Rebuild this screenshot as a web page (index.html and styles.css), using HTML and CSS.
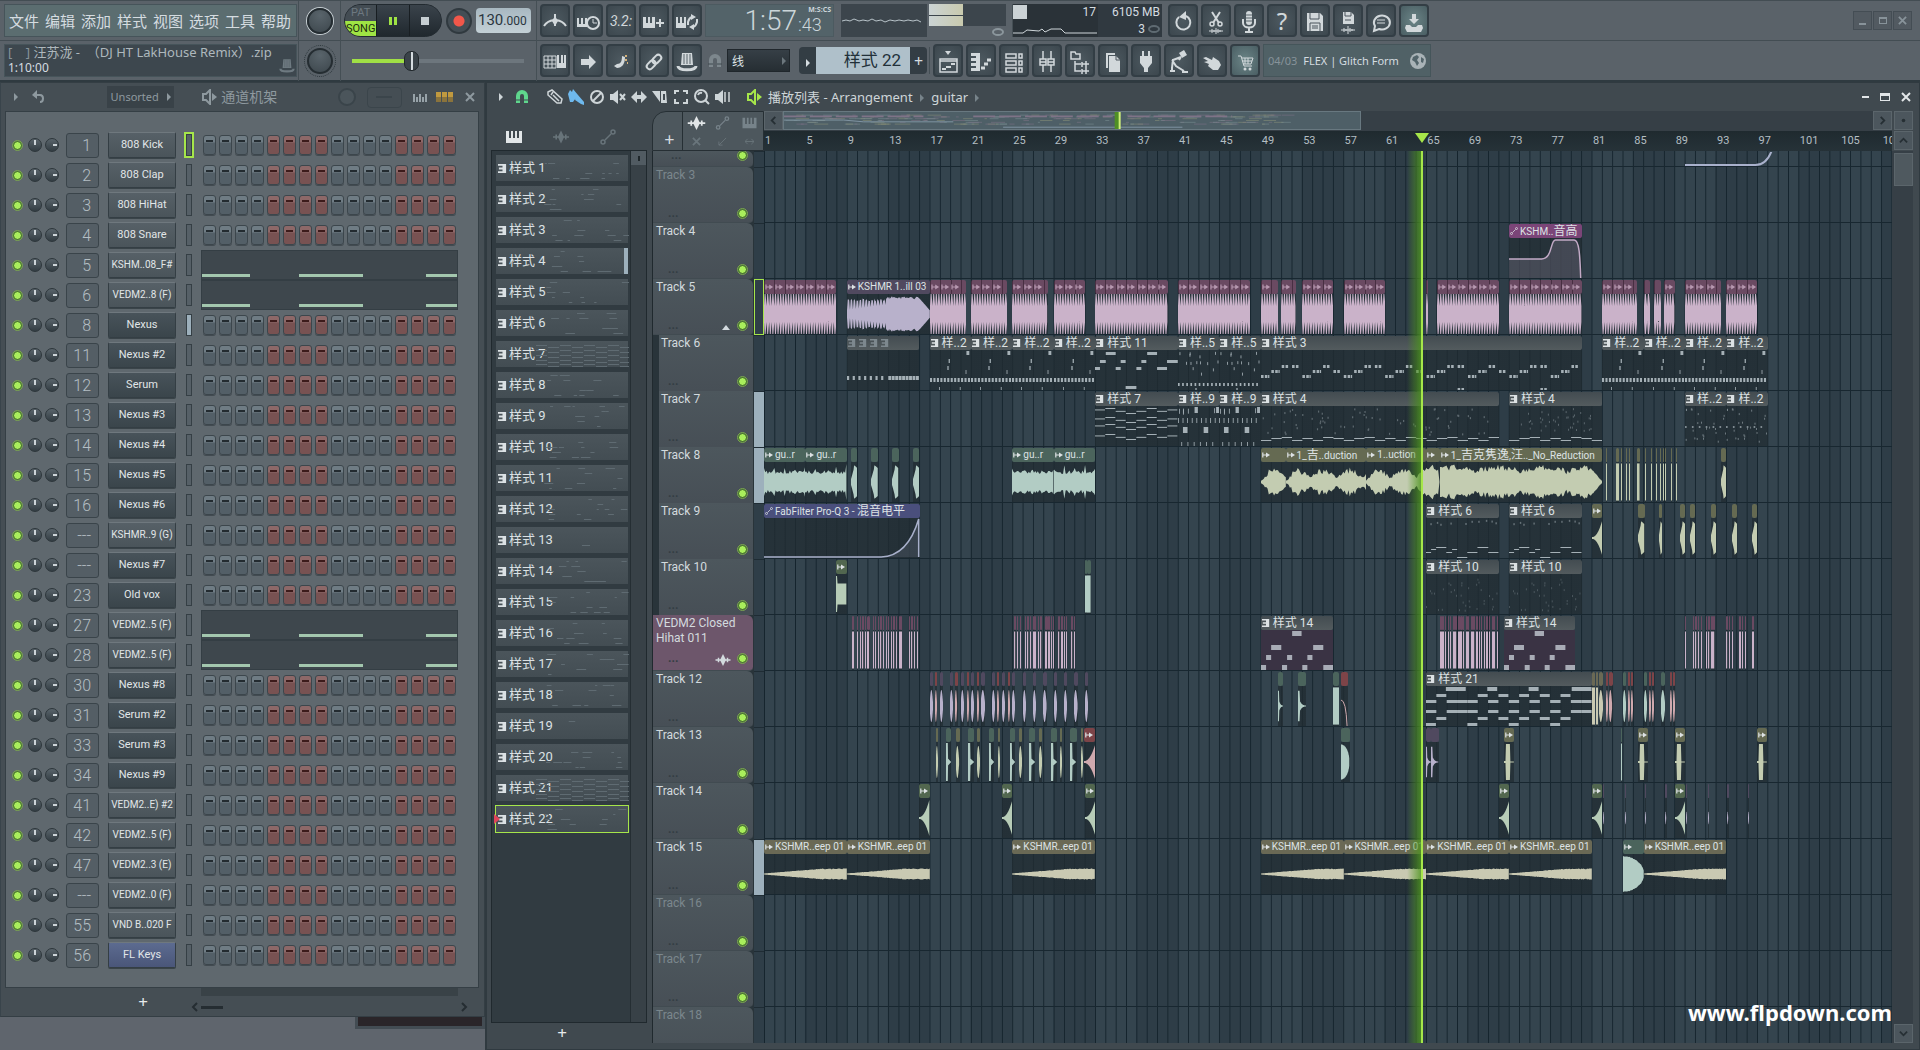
FILE: index.html
```html
<!DOCTYPE html>
<html lang="zh-CN">
<head>
    <meta charset="UTF-8">
    <meta name="viewport" content="width=device-width, initial-scale=1.0">
    <title>播放列表 - Arrangement</title>
    <link rel="stylesheet" href="styles.css">
</head>
<body>
    <svg class="sprite" aria-hidden="true">
        <symbol id="i-metronome" viewBox="0 0 30 30"><path d="M15 8v12M4 20q3-5 10-6M26 20q-3-5-10-6" fill="none" stroke="currentColor" stroke-width="2"/><path d="M15 10l3 5-3 5-3-5z" fill="currentColor"/></symbol>
        <symbol id="i-keyclock" viewBox="0 0 30 30"><path d="M4 12h2v6h2v-6h2v6h2v-6h2v9H4z" fill="currentColor"/><circle cx="20" cy="17" r="6" fill="#414d54" stroke="currentColor" stroke-width="2"/><path d="M20 13v4h4" fill="none" stroke="currentColor" stroke-width="1"/></symbol>
        <symbol id="i-keyplus" viewBox="0 0 30 30"><path d="M4 11h3v6h2v-6h2v6h2v-6h3v11H4zM20 13h2v3h3v2h-3v3h-2v-3h-3v-2h3z" fill="currentColor"/></symbol>
        <symbol id="i-keyloop" viewBox="0 0 30 30"><path d="M4 11h2v6h2v-6h2v6h2v-6h2v11H4z" fill="currentColor"/><path d="M16 19v-3q1-4 4-5M25 13v3q-1 4-4 5" fill="none" stroke="currentColor" stroke-width="2"/><path d="M19 8l5 3-5 3zM22 18l-5 3 5 3z" fill="currentColor"/></symbol>
        <symbol id="i-typing" viewBox="0 0 30 30"><path d="M4 10h12v12H4zM4 14h12M4 18h12M8 10v12M12 10v12" fill="none" stroke="currentColor" stroke-width="1"/><path d="M17 9h2v8h2V9h2v8h1V9h2v13h-9z" fill="currentColor"/></symbol>
        <symbol id="i-arrow" viewBox="0 0 30 30"><path d="M8 13h8V9l7 7-7 7v-4H8z" fill="currentColor"/></symbol>
        <symbol id="i-slide" viewBox="0 0 30 30"><path d="M8 20l3-2c4 0 5-3 5-8l3 1c0 7-3 11-8 11z" fill="currentColor"/><path d="M20 9v2M20 13v2M21 17h1" stroke="#d4b27a" stroke-width="2"/></symbol>
        <symbol id="i-link" viewBox="0 0 30 30"><g fill="none" stroke="currentColor" stroke-width="2" transform="rotate(-45 15 16)"><rect x="6" y="13" width="10" height="6" rx="3"/><rect x="14" y="13" width="10" height="6" rx="3"/></g></symbol>
        <symbol id="i-hat" viewBox="0 0 30 30"><path d="M10 7h10l1 12H9z" fill="currentColor"/><path d="M12 8v10M15 8v10M18 8v10" stroke="#59646b" stroke-width="1"/><path d="M6 20c0 5 18 5 18 0" fill="none" stroke="currentColor" stroke-width="3"/></symbol>
        <symbol id="i-undo" viewBox="0 0 30 30"><path d="M11 11a7 7 0 1 0 7-1" fill="none" stroke="currentColor" stroke-width="2"/><path d="M18 5v9l-7-3z" fill="currentColor"/></symbol>
        <symbol id="i-scissors" viewBox="0 0 30 30"><path d="M11 6l7 11M19 6l-7 11" stroke="currentColor" stroke-width="2"/><circle cx="11" cy="18" r="2" fill="none" stroke="currentColor" stroke-width="1.5"/><circle cx="19" cy="18" r="2" fill="none" stroke="currentColor" stroke-width="1.5"/><path d="M8 25h14M11 23v4M13 24v2M15 22v6M17 23v4M19 24v2" stroke="currentColor"/></symbol>
        <symbol id="i-mic" viewBox="0 0 30 30"><rect x="12" y="5" width="6" height="14" rx="3" fill="currentColor"/><path d="M12 9h6M12 12h6M12 15h6" stroke="#59646b"/><path d="M9 13v4c0 6 12 6 12 0v-4M15 21v5M11 26h8" fill="none" stroke="currentColor" stroke-width="2"/></symbol>
        <symbol id="i-save" viewBox="0 0 30 30"><path d="M7 7h13l3 3v15H7z" fill="currentColor"/><path d="M10 7v6h9V7M10 17v8M20 17v8M10 17h10M12 20h6M12 22h6" fill="none" stroke="#4a555c"/></symbol>
        <symbol id="i-savewave" viewBox="0 0 30 30"><path d="M10 6h8l3 3v9H10z" fill="currentColor"/><path d="M12 6v4h6V6M12 14h6" fill="none" stroke="#4a555c"/><path d="M8 24h14M11 22v4M13 23v2M15 20v8M17 22v4M19 23v2" stroke="currentColor"/></symbol>
        <symbol id="i-chat" viewBox="0 0 30 30"><path d="M9 20a8 7 0 1 1 4 3l-5 2z" fill="none" stroke="currentColor" stroke-width="2"/><path d="M11 14h8M11 17h8" stroke="currentColor"/></symbol>
        <symbol id="i-download" viewBox="0 0 30 30"><path d="M13 8h4v5h3l-5 5-5-5h3z" fill="currentColor"/><path d="M7 19h4l2 2h4l2-2h4l1 3-2 4H8l-2-4z" fill="currentColor"/></symbol>
        <symbol id="i-playlist" viewBox="0 0 30 30"><path d="M12 5h6l-3 4z" fill="currentColor"/><path d="M7 13h17v13H7zM7 15h17" fill="none" stroke="currentColor" stroke-width="1.5"/><path d="M9 23h4M13 21h5M18 18h4" stroke="currentColor" stroke-width="2"/></symbol>
        <symbol id="i-roll" viewBox="0 0 30 30"><path d="M5 7h9v18H5v-3h5v-2H5v-3h5v-2H5v-3h5v-2H5z" fill="currentColor"/><path d="M15 22h4M18 18h4M21 14h4" stroke="currentColor" stroke-width="3"/></symbol>
        <symbol id="i-rack" viewBox="0 0 30 30"><path d="M7 8h10v4H7zM7 15h10v4H7zM7 22h10v4H7zM20 8h3v4h-3zM20 15h3v4h-3zM20 22h3v4h-3z" fill="none" stroke="currentColor" stroke-width="1.5"/></symbol>
        <symbol id="i-mixer" viewBox="0 0 30 30"><path d="M11 5v8M11 19v7M19 5v8M19 19v7M8 13h6v6H8zM16 13h6v6h-6zM8 16h6M16 16h6" fill="none" stroke="currentColor" stroke-width="1.5"/></symbol>
        <symbol id="i-tree" viewBox="0 0 30 30"><path d="M6 6h4l1 2h4v5H6zM10 15v10h6M10 18h6" fill="none" stroke="currentColor" stroke-width="1.5"/><path d="M17 16v5M17 18h7M21 15v7M17 23v5M17 25h7M21 22v6" stroke="currentColor" stroke-width="1.5"/></symbol>
        <symbol id="i-pages" viewBox="0 0 30 30"><path d="M8 7h9v2h-7v13H8z" fill="currentColor"/><path d="M11 10h7l4 4v12H11z" fill="currentColor"/><path d="M18 10v4h4" fill="none" stroke="#4a555c"/></symbol>
        <symbol id="i-plug" viewBox="0 0 30 30"><path d="M11 5h2v5h4V5h2v5h2v7l-4 5v4h-4v-4l-4-5v-7h2z" fill="currentColor"/></symbol>
        <symbol id="i-person" viewBox="0 0 30 30"><path d="M15 7l5-3 3 5-5 3z" fill="currentColor"/><path d="M17 11L9 14M9 13l-1 9M8 14l4 6 8 5M17 11l-2 3M6 25h5M18 26h6M8 21v4" fill="none" stroke="currentColor" stroke-width="2"/></symbol>
        <symbol id="i-hand" viewBox="0 0 30 30"><path d="M6 12l3-1 6 3 1-3 6 4 2 4-3 5h-5l-5-4 1-2-5-2 4-1z" fill="currentColor"/></symbol>
        <symbol id="i-cart" viewBox="0 0 30 30"><path d="M8 10h3l3 10h8M12 12h11l-2 6h-8M15 12v6M18 12v6M12 15h10" fill="none" stroke="currentColor"/><circle cx="15" cy="23" r="1.5" fill="currentColor"/><circle cx="20" cy="23" r="1.5" fill="currentColor"/></symbol>
        <symbol id="i-globe" viewBox="0 0 16 16"><circle cx="8" cy="8" r="8" fill="currentColor"/><path d="M3 4l4-2 2 2-2 3 2 3-2 3-2-4-3-2zM11 4l3 2-1 4-2-1z" fill="#52646a"/></symbol>
        <symbol id="i-speaker" viewBox="0 0 16 16"><path d="M1 5h3l4-4v14l-4-4H1z" fill="none" stroke="currentColor" stroke-width="2"/><path d="M10 4l5 4-5 4z" fill="currentColor"/></symbol>
        <symbol id="i-magnet" viewBox="0 0 16 16"><path d="M4 14V7a4 4 0 0 1 8 0v7" fill="none" stroke="currentColor" stroke-width="4"/><path d="M1 11h5M10 11h5" stroke="#414a51" stroke-width="1"/></symbol>
        <symbol id="i-pencil" viewBox="0 0 16 16"><path d="M1 3l4-2 10 9-1 4-4 0-9-8zM4 6l2-3M6 6l6 6M1 3v3" fill="none" stroke="currentColor" stroke-width="1.5"/></symbol>
        <symbol id="i-brush" viewBox="0 0 16 16"><path d="M0 5l2-4 2 2 1-3 5 6-5 7-3 0zM8 8l2-2 6 7v3l-3-1-6-4z" fill="currentColor"/></symbol>
        <symbol id="i-ban" viewBox="0 0 16 16"><circle cx="8" cy="8" r="6" fill="none" stroke="currentColor" stroke-width="2"/><path d="M4 12l8-8" stroke="currentColor" stroke-width="2"/></symbol>
        <symbol id="i-mute" viewBox="0 0 16 16"><path d="M0 5h3l5-4v14l-5-4H0z" fill="currentColor"/><path d="M10 5l5 6M15 5l-5 6" stroke="currentColor" stroke-width="2"/></symbol>
        <symbol id="i-slip" viewBox="0 0 16 16"><path d="M0 8l6-6v4h4V2l6 6-6 6v-4H6v4z" fill="currentColor"/></symbol>
        <symbol id="i-slice" viewBox="0 0 16 16"><path d="M0 2h8v11zM9 2h5l1 12h-6z" fill="currentColor"/><path d="M12 5v6" stroke="#414a51" stroke-width="2"/></symbol>
        <symbol id="i-select" viewBox="0 0 16 16"><path d="M2 5V2h4M10 2h4v3M14 10v4h-4M6 14H2v-4" fill="none" stroke="currentColor" stroke-width="2"/></symbol>
        <symbol id="i-zoom" viewBox="0 0 16 16"><circle cx="7" cy="7" r="6" fill="none" stroke="currentColor" stroke-width="2"/><path d="M4 6q1-3 4-2M11 11l4 4" fill="none" stroke="currentColor" stroke-width="2"/></symbol>
        <symbol id="i-play" viewBox="0 0 16 16"><path d="M0 5h3l5-4v14l-5-4H0z" fill="currentColor"/><path d="M10 3v10M14 3v10" stroke="currentColor" stroke-width="1.5"/></symbol>
        <symbol id="i-keys" viewBox="0 0 16 16"><path d="M0 2h3v7h2V2h2v7h2V2h2v7h2V2h3v12H0z" fill="currentColor"/></symbol>
        <symbol id="i-wave" viewBox="0 0 20 16"><path d="M0 8h20M4 5v6M16 5v6" stroke="currentColor" stroke-width="2"/><path d="M10 0l4 8-4 8-4-8z" fill="currentColor"/></symbol>
        <symbol id="i-auto" viewBox="0 0 16 16"><path d="M5 11l6-6" stroke="currentColor" stroke-width="1.5"/><circle cx="3" cy="13" r="2" fill="none" stroke="currentColor" stroke-width="1.5"/><circle cx="13" cy="3" r="2" fill="none" stroke="currentColor" stroke-width="1.5"/></symbol>
        <symbol id="i-clip" viewBox="0 0 10 10"><path d="M1 2v6M1 5h5" stroke="currentColor" stroke-width="1.5" fill="none"/><path d="M5 2l5 3-5 3z" fill="currentColor"/></symbol>
        <symbol id="i-pat" viewBox="0 0 10 10"><path d="M0 0h9v10H0V8h5V6H1V4h4V2H0z" fill="currentColor"/></symbol>
        <symbol id="i-back" viewBox="0 0 16 16"><path d="M6 1v9L1 6z" fill="currentColor"/><path d="M5 6h4c4 0 4 7 0 7" fill="none" stroke="currentColor" stroke-width="2"/></symbol>
        <symbol id="i-close" viewBox="0 0 10 10"><path d="M1 1l8 8M9 1L1 9" stroke="currentColor" stroke-width="2"/></symbol>
        <symbol id="i-up" viewBox="0 0 10 10"><path d="M1 7l4-4 4 4" fill="none" stroke="currentColor" stroke-width="2"/></symbol>
        <symbol id="i-down" viewBox="0 0 10 10"><path d="M1 3l4 4 4-4" fill="none" stroke="currentColor" stroke-width="2"/></symbol>
        <symbol id="i-prev" viewBox="0 0 10 10"><path d="M7 1L3 5l4 4" fill="none" stroke="currentColor" stroke-width="2"/></symbol>
        <symbol id="i-next" viewBox="0 0 10 10"><path d="M3 1l4 4-4 4" fill="none" stroke="currentColor" stroke-width="2"/></symbol>
        <symbol id="i-dot" viewBox="0 0 10 10"><circle cx="5" cy="5" r="2" fill="currentColor"/></symbol>
        <symbol id="i-curve" viewBox="0 0 10 10"><path d="M1 9L9 1M1 5v4h4" fill="none" stroke="currentColor"/></symbol>
        <symbol id="i-wide" viewBox="0 0 10 10"><path d="M0 5h10M3 2L0 5l3 3M7 2l3 3-3 3" fill="none" stroke="currentColor"/></symbol>
    </svg>

    <header class="toolbar">
        <div class="bar">
            <nav class="menu">
                <a href="#">文件</a><a href="#">编辑</a><a href="#">添加</a><a href="#">样式</a><a href="#">视图</a><a href="#">选项</a><a href="#">工具</a><a href="#">帮助</a>
            </nav>
            <div class="knob-cell"><span class="big-knob ring"></span></div>
            <div class="transport">
                <div class="deck">
                    <button class="mode"><span class="pat">PAT</span><span class="song">SONG</span></button>
                    <button class="pause" aria-label="Pause"><i></i><i></i></button>
                    <button class="stop" aria-label="Stop"><i></i></button>
                </div>
                <button class="record" aria-label="Record"></button>
                <div class="tempo"><b>130</b>.000</div>
            </div>
            <div class="buttons">
                <button class="tool" aria-label="Metronome"><svg><use href="#i-metronome"/></svg></button>
                <button class="tool" aria-label="Wait for input"><svg><use href="#i-keyclock"/></svg></button>
                <button class="tool count">3.2:</button>
                <button class="tool" aria-label="Step edit"><svg><use href="#i-keyplus"/></svg></button>
                <button class="tool" aria-label="Loop record"><svg><use href="#i-keyloop"/></svg></button>
            </div>
            <div class="clock"><span class="big">1:57</span><span class="rest"><small>M:S:CS</small><span>:43</span></span></div>
            <div class="meters">
                <svg class="scope" viewBox="0 0 86 33"><path d="M1 17l4-1 4 1 4-2 5 2 4-1 5 1 4-2 4 2 5-1 4 2 5-2 5 1 4-1 5 1 4-1 5 1 4-1 4 2" fill="none" stroke="#b9c4ca" stroke-width="1"/></svg>
                <div class="peaks"><div class="peak-box"><i></i><i></i></div><span class="eye"></span></div>
            </div>
            <div class="cpu">
                <div class="cpu-left"><i></i><span>17</span><svg viewBox="0 0 84 14"><path d="M0 11h10l4-3 12 1 3-2 3 3 6-3 10 0 4 4h32" fill="none" stroke="#cfd6da"/></svg></div>
                <div class="cpu-right"><span>6105 MB</span><span>3 <em></em></span></div>
            </div>
            <div class="buttons">
                <button class="tool" aria-label="Undo"><svg><use href="#i-undo"/></svg></button>
                <button class="tool" aria-label="Cut"><svg><use href="#i-scissors"/></svg></button>
                <button class="tool" aria-label="Record audio"><svg><use href="#i-mic"/></svg></button>
                <button class="tool help">?</button>
                <button class="tool" aria-label="Save"><svg><use href="#i-save"/></svg></button>
                <button class="tool" aria-label="Export"><svg><use href="#i-savewave"/></svg></button>
                <button class="tool" aria-label="Chat"><svg><use href="#i-chat"/></svg></button>
                <button class="tool teal" aria-label="Download"><svg><use href="#i-download"/></svg></button>
            </div>
            <div class="win-buttons">
                <button aria-label="Minimise"><i class="min"></i></button>
                <button aria-label="Restore"><i class="restore"></i></button>
                <button aria-label="Close"><svg><use href="#i-close"/></svg></button>
            </div>
        </div>
        <div class="bar">
            <div class="hint">
                <div><span class="dim">[ &nbsp; &nbsp;]</span> 汪苏泷 -&nbsp; （DJ HT LakHouse Remix）.zip</div>
                <div class="time">1:10:00</div>
                <svg class="hint-icon"><use href="#i-hat"/></svg>
            </div>
            <div class="knob-cell"><span class="big-knob dots"></span></div>
            <div class="transport"><input type="range" class="position" min="0" max="100" value="33" aria-label="Song position"></div>
            <div class="buttons">
                <button class="tool" aria-label="Typing keyboard"><svg><use href="#i-typing"/></svg></button>
                <button class="tool" aria-label="Step"><svg><use href="#i-arrow"/></svg></button>
                <button class="tool" aria-label="Slide"><svg><use href="#i-slide"/></svg></button>
                <button class="tool" aria-label="Link"><svg><use href="#i-link"/></svg></button>
                <button class="tool" aria-label="Multilink"><svg><use href="#i-hat"/></svg></button>
            </div>
            <div class="pattern-bar">
                <svg class="magnet"><use href="#i-magnet"/></svg>
                <div class="snap-wrap">
                    <select class="snap" aria-label="Snap"><option>线</option></select>
                    <i class="tri"></i>
                </div>
                <div class="pattern">
                    <button class="side" aria-label="Pattern menu"><i class="tri"></i></button>
                    <span class="pattern-name">样式 22</span>
                    <button class="side">+</button>
                </div>
            </div>
            <div class="buttons">
                <button class="tool" aria-label="Playlist"><svg><use href="#i-playlist"/></svg></button>
                <button class="tool" aria-label="Piano roll"><svg><use href="#i-roll"/></svg></button>
                <button class="tool" aria-label="Channel rack"><svg><use href="#i-rack"/></svg></button>
                <button class="tool" aria-label="Mixer"><svg><use href="#i-mixer"/></svg></button>
                <button class="tool" aria-label="Browser"><svg><use href="#i-tree"/></svg></button>
                <button class="tool" aria-label="Project picker"><svg><use href="#i-pages"/></svg></button>
                <button class="tool" aria-label="Plugins"><svg><use href="#i-plug"/></svg></button>
                <button class="tool" aria-label="Tempo tapper"><svg><use href="#i-person"/></svg></button>
                <button class="tool" aria-label="Touch"><svg><use href="#i-hand"/></svg></button>
                <button class="tool teal" aria-label="Shop"><svg><use href="#i-cart"/></svg></button>
            </div>
            <div class="news"><span class="dim">04/03</span><a href="#">FLEX | Glitch Form</a><svg><use href="#i-globe"/></svg></div>
        </div>
    </header>

    <main>
        <div class="left">
            <section class="rack">
                <div class="rack-head">
                    <i class="tri"></i>
                    <svg class="sm"><use href="#i-back"/></svg>
                    <button class="group">Unsorted <i class="tri"></i></button>
                    <svg class="sm title-icon"><use href="#i-speaker"/></svg>
                    <h2>通道机架</h2>
                    <span class="swing"></span>
                    <span class="swing-box"><i></i></span>
                    <span class="graph"><i></i><i></i><i></i><i></i><i></i></span>
                    <span class="grid-mode"><i></i><i></i><i></i></span>
                    <svg class="sm close"><use href="#i-close"/></svg>
                </div>
                <div class="channels" id="channels"></div>
                <div class="rack-foot">
                    <button class="add" aria-label="Add channel">+</button>
                    <div class="rack-scroll">
                        <div class="track"></div>
                        <div class="thumb-row"><svg><use href="#i-prev"/></svg><i></i><svg><use href="#i-next"/></svg></div>
                    </div>
                </div>
            </section>
            <div class="behind"></div>
        </div>

        <section class="playlist">
            <div class="pl-head">
                <i class="tri"></i>
                <svg class="sm green-icon"><use href="#i-magnet"/></svg>
                <div class="pl-tools">
                    <svg class="sm"><use href="#i-pencil"/></svg>
                    <svg class="sm blue-icon"><use href="#i-brush"/></svg>
                    <svg class="sm"><use href="#i-ban"/></svg>
                    <svg class="sm"><use href="#i-mute"/></svg>
                    <svg class="sm"><use href="#i-slip"/></svg>
                    <svg class="sm"><use href="#i-slice"/></svg>
                    <svg class="sm"><use href="#i-select"/></svg>
                    <svg class="sm"><use href="#i-zoom"/></svg>
                    <svg class="sm"><use href="#i-play"/></svg>
                </div>
                <svg class="sm lime-icon"><use href="#i-speaker"/></svg>
                <h2>播放列表 - Arrangement <i class="tri"></i> guitar <i class="tri"></i></h2>
                <div class="pl-win"><i class="min"></i><i class="max"></i><svg><use href="#i-close"/></svg></div>
            </div>
            <div class="pl-body">
                <aside class="picker">
                    <div class="picker-tabs">
                        <svg class="sm"><use href="#i-keys"/></svg>
                        <svg class="sm off"><use href="#i-wave"/></svg>
                        <svg class="sm off"><use href="#i-auto"/></svg>
                    </div>
                    <div class="picker-box">
                        <ul class="patterns" id="patterns"></ul>
                        <div class="picker-scroll"><i></i></div>
                    </div>
                    <button class="add" aria-label="Add pattern">+</button>
                </aside>
                <div class="arrange">
                    <div class="corner">
                        <button class="corner-add" aria-label="Add track">+</button>
                        <div class="corner-modes">
                            <svg><use href="#i-wave"/></svg><svg class="off"><use href="#i-auto"/></svg><svg class="off"><use href="#i-keys"/></svg>
                            <svg class="tiny"><use href="#i-close"/></svg><svg class="tiny"><use href="#i-curve"/></svg><svg class="tiny"><use href="#i-wide"/></svg>
                        </div>
                    </div>
                    <div class="top-strip">
                        <div class="overview">
                            <button aria-label="Scroll left"><svg><use href="#i-prev"/></svg></button>
                            <div class="view" id="view"></div>
                            <button aria-label="Scroll right"><svg><use href="#i-next"/></svg></button>
                        </div>
                        <div class="ruler" id="ruler"></div>
                    </div>
                    <div class="scroll-top">
                        <button aria-label="Zoom"><svg><use href="#i-dot"/></svg></button>
                        <button aria-label="Scroll up"><svg><use href="#i-up"/></svg></button>
                    </div>
                    <div class="heads" id="heads"></div>
                    <div class="lanes-wrap">
                        <div class="lanes" id="lanes"></div>
                        <div class="watermark">www.flpdown.com</div>
                    </div>
                    <div class="scroll-side"><i></i><button aria-label="Scroll down"><svg><use href="#i-down"/></svg></button></div>
                </div>
            </div>
        </section>
    </main>
    <script src="script.js"></script>
</body>
</html>
```
FILE: styles.css
```css
* {
    box-sizing: border-box;
}
body {
    margin: 0;
    height: 100vh;
    display: flex;
    flex-direction: column;
    overflow: hidden;
    background: #5d656c;
    color: #d5dce0;
    font: 13px/16px "Noto Sans", "Noto Sans CJK SC", sans-serif;
}
button {
    font: inherit;
    color: inherit;
    padding: 0;
    border: none;
    background: none;
}
a {
    color: inherit;
    text-decoration: none;
}
h2 {
    margin: 0;
    font-size: 15px;
    font-weight: normal;
}
.sprite {
    display: none;
}
.dim {
    color: #87939a;
}
.tri {
    display: inline-block;
    border: 4px solid transparent;
    border-left-color: currentColor;
    border-right-width: 0;
}
.sm {
    width: 16px;
    height: 16px;
    flex: none;
}

/* main toolbar */
.toolbar {
    flex: none;
    background: #5a6269;
    border-bottom: 2px solid #2f3a40;
}
.bar {
    display: flex;
    align-items: center;
    height: 40px;
    border-top: 1px solid #434d53;
    padding-left: 4px;
}
.menu, .hint {
    width: 293px;
    height: 33px;
    flex: none;
    border: 1px solid #46545a;
}
.menu {
    display: flex;
    align-items: center;
    gap: 6px;
    padding: 0 4px;
    background: #5b6d70;
    font-size: 15px;
    white-space: nowrap;
}
.hint {
    background: #3d474e;
    padding: 0 3px;
    line-height: 15px;
    position: relative;
    color: #aeb8bd;
    white-space: nowrap;
}
.hint .time {
    color: #d5dce0;
    font-size: 12px;
}
.hint-icon {
    position: absolute;
    right: -2px;
    bottom: 0;
    width: 22px;
    height: 22px;
    color: #6e7a81;
}
.knob-cell {
    width: 43px;
    height: 40px;
    flex: none;
    display: flex;
    align-items: center;
    justify-content: center;
    border-right: 1px solid #454f55;
    border-left: 1px solid #454f55;
    margin-left: 1px;
}
.big-knob {
    width: 26px;
    height: 26px;
    border-radius: 50%;
    background: radial-gradient(circle at 50% 25%, #59646b, #3d474d);
    border: 2px solid #252d32;
}
.ring {
    box-shadow: 0 0 0 1px #c6ced2;
}
.dots {
    outline: 1px dotted #2e383d;
    outline-offset: 2px;
}
.transport {
    width: 196px;
    height: 40px;
    flex: none;
    display: flex;
    align-items: center;
    padding-left: 3px;
    border-right: 1px solid #454f55;
}
.deck {
    display: flex;
    width: 98px;
    height: 33px;
    overflow: hidden;
    border-radius: 17px;
    background: #283037;
    border: 1px solid #222a30;
}
.deck button {
    flex: 1;
    display: flex;
    align-items: center;
    justify-content: center;
    gap: 2px;
    background: linear-gradient(#3a434b, #20282e);
}
.deck button + button {
    border-left: 1px solid #181e22;
}
.deck .mode {
    flex-direction: column;
    gap: 0;
    align-items: stretch;
    font: 11px/16px "Roboto", sans-serif;
}
.mode span {
    flex: 1;
}
.pat {
    color: #6d7880;
    background: #434c53;
}
.song {
    background: #9fe444;
    color: #1c2a10;
}
.pause i {
    width: 3px;
    height: 8px;
    background: #9fe444;
}
.stop i {
    width: 8px;
    height: 8px;
    background: #c6ced2;
}
.record {
    width: 26px;
    height: 26px;
    flex: none;
    margin: 0 4px;
    border-radius: 50%;
    border: 2px solid #30393f;
    background: radial-gradient(circle, #f2574a 0 5px, #444e55 6px);
}
.tempo {
    width: 55px;
    height: 25px;
    border-radius: 4px;
    background: linear-gradient(#a8b8c1, #c3d0d6);
    color: #2a3640;
    font: 12px/25px "Roboto", sans-serif;
    padding-left: 2px;
}
.tempo b {
    font-weight: normal;
    font-size: 15px;
}
.position {
    appearance: none;
    width: 172px;
    height: 26px;
    margin: 0 0 0 8px;
    background: linear-gradient(to right, #a0e045 34%, #6d767d 34%) center / 100% 4px no-repeat;
}
.position::-webkit-slider-thumb {
    appearance: none;
    width: 15px;
    height: 20px;
    border-radius: 7px;
    background: linear-gradient(to right, #3a4349 6px, #d5dce0 6px 8px, #3a4349 8px);
    border: 1px solid #20272b;
}
.buttons {
    display: flex;
    gap: 3px;
    padding: 0 3px;
    flex: none;
}
.tool {
    width: 30px;
    height: 33px;
    border: 2px solid #333e45;
    border-radius: 4px;
    background: radial-gradient(#4d5960, #3c474e);
    color: #d2d8db;
    display: flex;
    align-items: center;
    justify-content: center;
}
.tool svg {
    width: 30px;
    height: 30px;
    flex: none;
}
.teal {
    background: radial-gradient(#6b8587, #4a5e63);
}
.count {
    font: italic 14px "Roboto", sans-serif;
}
.help {
    font-size: 24px;
}
.clock {
    width: 129px;
    height: 33px;
    flex: none;
    display: flex;
    justify-content: flex-end;
    padding-right: 2px;
    border: 1px solid #4c5a60;
    background: #536369;
    font-family: "Roboto", sans-serif;
    font-weight: 300;
    color: #ccd6da;
}
.clock .big {
    font-size: 28px;
    line-height: 32px;
}
.rest {
    width: 34px;
    font-size: 18px;
    padding-left: 1px;
}
.rest small {
    display: block;
    font: bold 7px/10px "Noto Sans", sans-serif;
    text-align: right;
}
.rest span {
    line-height: 20px;
}
.meters {
    display: flex;
    flex: none;
    width: 179px;
    padding-left: 7px;
    gap: 2px;
    border-right: 1px solid #454f55;
}
.scope {
    width: 86px;
    height: 33px;
    background: #3c454c;
}
.peaks {
    width: 77px;
}
.peak-box {
    height: 22px;
    background: #3c454c;
    display: grid;
    gap: 1px;
}
.peak-box i {
    width: 34px;
    background: linear-gradient(to right, #cbd3d4, #c9caae);
}
.eye {
    display: block;
    margin: 2px 2px 0 auto;
    width: 12px;
    height: 8px;
    border: 2px solid #8b969c;
    border-radius: 50%;
}
.cpu {
    width: 149px;
    height: 33px;
    flex: none;
    display: flex;
    justify-content: space-between;
    background: #303940;
    margin: 0 3px 0 0;
    font: 12px/16px "Roboto", sans-serif;
}
.cpu-left {
    width: 85px;
    display: grid;
    grid-template-columns: 14px 1fr;
    text-align: right;
    background: #2a3238;
}
.cpu-left i {
    background: #cbd2d5;
    height: 14px;
    margin-top: 1px;
}
.cpu-left svg {
    grid-column: 1 / 3;
    height: 14px;
}
.cpu-left span {
    padding-right: 2px;
}
.cpu-right {
    display: grid;
    text-align: right;
    padding-right: 2px;
}
.cpu-right em {
    display: inline-block;
    width: 12px;
    height: 8px;
    border: 2px solid #5f6b72;
    border-radius: 50%;
}
.win-buttons {
    margin-left: auto;
    padding-right: 8px;
    display: flex;
    gap: 1px;
}
.win-buttons button {
    width: 19px;
    height: 19px;
    display: flex;
    align-items: center;
    justify-content: center;
    background: #525a61;
    border: 1px solid #444d54;
    color: #88939a;
}
.win-buttons svg {
    width: 9px;
    height: 9px;
}
.win-buttons .min {
    background: #88939a;
    margin-top: 6px;
}
.restore {
    width: 8px;
    height: 7px;
    border: 1px solid #88939a;
    border-top-width: 2px;
}
.pattern-bar {
    display: flex;
    align-items: center;
    width: 225px;
    flex: none;
    border-right: 1px solid #454f55;
}
.magnet {
    width: 16px;
    height: 16px;
    margin: 0 4px 0 2px;
    color: #7d878d;
}
.snap-wrap {
    position: relative;
    height: 23px;
}
.snap-wrap .tri {
    position: absolute;
    right: 4px;
    top: 8px;
    color: #6b767c;
}
.snap {
    appearance: none;
    width: 63px;
    height: 23px;
    border: 1px solid #20272c;
    background: linear-gradient(#363f46, #262e33);
    color: #dfe5e8;
    font: 12px "Noto Sans CJK SC", sans-serif;
    padding: 0 4px;
}
.pattern {
    display: flex;
    margin-left: 9px;
    height: 27px;
    background: #333d44;
    border-radius: 4px;
}
.side {
    width: 17px;
    font-size: 16px;
}
.pattern-name {
    width: 94px;
    background: #afc0ca;
    color: #223039;
    font: 17px/26px "Roboto", "Noto Sans CJK SC", sans-serif;
    text-align: right;
    padding-right: 9px;
}
.news {
    display: flex;
    align-items: center;
    gap: 6px;
    width: 168px;
    height: 33px;
    padding: 0 4px;
    border: 1px solid #45555a;
    background: #506166;
    font-size: 11px;
    white-space: nowrap;
}
.news svg {
    width: 16px;
    height: 16px;
    margin-left: auto;
    flex: none;
    color: #a9b3b7;
}

/* channel rack */
main {
    flex: 1;
    min-height: 0;
    display: grid;
    grid-template-columns: 485px 1fr;
}
.left {
    background: #5f656d;
    min-height: 0;
}
.rack {
    background: #454e54;
    border: 1px solid #343e44;
    border-left-color: #39444b;
    padding: 0 5px 0 4px;
}
.rack-head {
    height: 28px;
    display: flex;
    align-items: center;
    color: #8e999f;
    padding: 0 4px 0 9px;
}
.rack-head > .tri {
    margin-right: 13px;
}
.rack-head h2 {
    font-size: 14px;
    margin-left: 3px;
    width: 120px;
}
.group {
    width: 69px;
    height: 22px;
    margin-left: 60px;
    background: #394248;
    font-size: 11px;
    white-space: nowrap;
}
.group .tri {
    margin-left: 5px;
}
.title-icon {
    margin-left: 28px;
}
.swing {
    width: 18px;
    height: 18px;
    border-radius: 50%;
    border: 2px solid #3a444a;
    background: #4b555b;
}
.swing-box {
    width: 36px;
    height: 21px;
    margin: 0 11px;
    border: 1px solid #3b454b;
    border-radius: 4px;
    display: flex;
    align-items: center;
    justify-content: center;
}
.swing-box i {
    width: 16px;
    height: 2px;
    background: #3b454b;
}
.graph, .grid-mode {
    display: flex;
    align-items: flex-end;
    gap: 1px;
    height: 10px;
}
.graph i {
    width: 2px;
    height: 8px;
    background: #97a2a8;
}
.graph i:nth-child(2n) {
    height: 5px;
}
.grid-mode {
    margin: 0 12px 0 9px;
}
.grid-mode i {
    width: 5px;
    height: 10px;
    background: linear-gradient(#c0993f 5px, #8a733c 5px);
}
.close {
    width: 10px;
    height: 10px;
}
.channels {
    background: #5f686e;
    border: 1px solid #353f45;
    padding: 18px 0 17px 7px;
}
.channel {
    height: 30px;
    display: flex;
    align-items: center;
}
.led {
    width: 9px;
    height: 9px;
    flex: none;
    border-radius: 50%;
    background: #a9ee5c;
    border: 1px solid #3b6a22;
    outline: 1px solid #7ba650;
}
.pot {
    width: 14px;
    height: 14px;
    margin-left: 3px;
    flex: none;
    border-radius: 50%;
    border: 1px solid #2d363b;
    background: linear-gradient(#cdd4d8, #cdd4d8) center 1px / 2px 5px no-repeat, linear-gradient(#59646b, #333d43);
}
.pot.vol {
    background: linear-gradient(#cdd4d8, #cdd4d8) 7px center / 4px 2px no-repeat, linear-gradient(#59646b, #333d43);
}
.led + .pot {
    margin-left: 6px;
}
.route {
    width: 33px;
    height: 25px;
    margin: 0 9px 0 7px;
    border: 1px solid #3a444a;
    border-radius: 3px;
    background: #545e65;
    color: #b5bfc4;
    font: 300 16px/23px "Roboto", sans-serif;
    text-align: right;
    padding-right: 7px;
    white-space: nowrap;
}
.name {
    width: 68px;
    height: 26px;
    border: 1px solid #343e44;
    border-top-color: #6f787e;
    border-radius: 2px;
    background: linear-gradient(#566067, #4a545a);
    box-shadow: 0 1px #3a4449;
    color: #e1e6e8;
    font: 11px/22px "Roboto", sans-serif;
    white-space: nowrap;
}
.name.long {
    font-size: 10px;
}
.name.synth {
    background: linear-gradient(#48535a, #3a454b);
}
.name.blue {
    background: linear-gradient(#5c6b90, #4a5679);
}
.pick {
    width: 6px;
    height: 22px;
    margin: 0 11px 0 10px;
    border: 1px solid #353f45;
    background: #566067;
}
.pick.on {
    background: #9db0bc;
}
.pick.sel {
    outline: 2px solid #a6e64a;
}
.steps {
    display: flex;
    gap: 3px;
}
.step {
    width: 13px;
    height: 20px;
    border: 1px solid #3c464c;
    border-radius: 3px;
    background: linear-gradient(#232b30, #232b30) center 4px / 7px 2px no-repeat, linear-gradient(#6f7c84 6px, #535f67 7px);
    box-shadow: 0 1px #424b51;
}
.step.red {
    background: linear-gradient(#3c1b1b, #3c1b1b) center 4px / 7px 2px no-repeat, linear-gradient(#8d6868 6px, #785252 7px);
}
.mini {
    width: 257px;
    height: 30px;
    margin-left: -2px;
    background: linear-gradient(to right, #a3c7ae 19%, transparent 19% 38%, #a3c7ae 38% 63%, transparent 63% 88%, #a3c7ae 88%) 0 23px / 100% 3px no-repeat #3e474d;
    border: 1px solid #343e44;
}
.rack-foot {
    height: 28px;
    display: flex;
}
.add {
    font-size: 17px;
    color: #e6eaec;
}
.rack-foot .add {
    width: 196px;
    padding-left: 80px;
}
.rack-scroll {
    flex: 1;
    color: #252d32;
}
.track {
    height: 8px;
    margin-right: 21px;
    background: #394247;
}
.thumb-row {
    display: flex;
    align-items: center;
    margin: 6px 10px 0 -11px;
}
.thumb-row svg {
    width: 10px;
    height: 10px;
}
.thumb-row i {
    width: 22px;
    height: 3px;
    margin: 0 auto 0 1px;
    background: #252d32;
}
.behind {
    height: 12px;
    margin-left: 355px;
    border: 3px solid #434c53;
    border-top: none;
    background: #2a2529;
}

/* playlist */
.playlist {
    display: flex;
    flex-direction: column;
    background: #40494f;
    border: 1px solid #303a40;
    border-left: 2px solid #303a40;
    min-width: 0;
    min-height: 0;
    padding-bottom: 6px;
}
.pl-head {
    height: 28px;
    flex: none;
    display: flex;
    align-items: center;
    padding: 0 8px 0 12px;
    color: #ced5d8;
}
.pl-head > .green-icon {
    margin: 0 17px 0 11px;
}
.green-icon { color: #5fd68d; }
.blue-icon { color: #6eb9ee; }
.lime-icon { color: #a6e64a; }
.pl-tools {
    display: flex;
    gap: 5px;
    margin-right: 16px;
}
.pl-head h2 {
    margin-left: 5px;
    font-size: 13px;
    white-space: nowrap;
}
.pl-head h2 .tri {
    color: #77838a;
    margin: 0 4px;
}
.pl-win {
    margin-left: auto;
    display: flex;
    align-items: center;
    gap: 11px;
    color: #e2e6e8;
}
.min {
    width: 7px;
    height: 2px;
    background: #e2e6e8;
}
.max {
    width: 10px;
    height: 8px;
    border: 1px solid #e2e6e8;
    border-top-width: 3px;
}
.pl-win svg {
    width: 10px;
    height: 10px;
}
.pl-body {
    flex: 1;
    min-height: 0;
    display: grid;
    grid-template-columns: 165px 1fr;
}
.picker {
    display: flex;
    flex-direction: column;
    padding: 0 5px 0 4px;
    min-height: 0;
}
.picker-tabs {
    height: 39px;
    flex: none;
    display: flex;
    align-items: center;
    gap: 31px;
    padding: 12px 0 0 15px;
    color: #e2e6e8;
}
.off {
    color: #68747a;
}
.picker-box {
    flex: 1;
    min-height: 0;
    display: flex;
    justify-content: space-between;
    border: 1px solid #20292e;
    background: #313b41;
}
.patterns {
    list-style: none;
    margin: 0;
    padding: 4px 2px 4px 4px;
    flex: 1;
    display: flex;
    flex-direction: column;
    gap: 5px;
    min-width: 0;
}
.patterns li {
    height: 26px;
    flex: none;
    display: flex;
    align-items: center;
    gap: 2px;
    padding-left: 2px;
    position: relative;
    background: linear-gradient(#4b555b, #434d53);
    font: 13px/24px "Roboto", "Noto Sans CJK SC", sans-serif;
    color: #dbe1e4;
}
.patterns li > svg:first-child {
    width: 9px;
    height: 9px;
}
.patterns .notes {
    position: absolute;
    inset: 0 0 0 40px;
    width: 93px;
    height: 26px;
    color: #5f6b72;
}
.patterns .marked {
    border-right: 4px solid #9db0bc;
}
.patterns .current {
    outline: 1px solid #a6e64a;
}
.current::before {
    content: "";
    position: absolute;
    left: -2px;
    border: 5px solid transparent;
    border-left: 6px solid #e0455a;
    border-right: none;
}
.picker-scroll {
    width: 16px;
    background: #384147;
    border-left: 1px solid #252e33;
}
.picker-scroll i {
    display: block;
    height: 14px;
    background: linear-gradient(#1f272b, #1f272b) center / 2px 5px no-repeat #515b62;
}
.picker .add {
    height: 20px;
    padding-right: 14px;
}
.arrange {
    display: grid;
    grid-template-columns: 112px 1fr 21px;
    grid-template-rows: 40px 1fr;
    min-width: 0;
    min-height: 0;
    padding-right: 6px;
}
.corner {
    display: flex;
    background: #4d575d;
    border: 1px solid #262f34;
    border-top-left-radius: 14px;
}
.corner-add {
    width: 30px;
    border-right: 1px solid #262f34;
    padding-top: 16px;
    padding-left: 4px;
    font-size: 18px;
}
.corner-modes {
    flex: 1;
    display: grid;
    grid-template-columns: repeat(3, 1fr);
    place-items: center;
    color: #606c72;
}
.corner-modes svg {
    width: 19px;
    height: 14px;
    color: #e2e6e8;
}
.corner-modes .off {
    color: #77838a;
}
.corner-modes .tiny {
    width: 9px;
    height: 9px;
    color: #69757b;
}
.top-strip {
    min-width: 0;
    display: flex;
    flex-direction: column;
}
.overview {
    height: 20px;
    display: flex;
    background: #363f46;
}
.overview button, .scroll-top button, .scroll-side button {
    width: 19px;
    height: 19px;
    flex: none;
    display: flex;
    align-items: center;
    justify-content: center;
    background: #4c565d;
    border: 1px solid #5b656b;
    color: #262f34;
}
.overview button svg, .scroll-top svg, .scroll-side svg {
    width: 9px;
    height: 9px;
}
.view {
    flex: 1;
    position: relative;
}
.view svg {
    width: 53%;
    height: 19px;
    display: block;
    background: #4e5f67;
    border: 1px solid #687880;
}
.ruler {
    flex: 1;
    position: relative;
    overflow: hidden;
    background: linear-gradient(#1f2a2f, #263238);
    font: 11px/19px "Roboto", sans-serif;
    color: #b4bec3;
}
.ruler span {
    position: absolute;
    padding-left: 1px;
}
.ruler i {
    position: absolute;
    top: 2px;
    margin-left: -8px;
    border: 7px solid transparent;
    border-top: 10px solid #a6e64a;
    border-bottom: none;
}
.scroll-top {
    display: flex;
    flex-direction: column;
    gap: 1px;
    align-items: flex-end;
}
.heads, .lanes-wrap {
    overflow: hidden;
    min-height: 0;
}
.heads {
    background: #29343a;
    border-left: 1px solid #20292e;
}
.head {
    height: 56px;
    display: grid;
    grid-template-columns: 100px 10px;
    gap: 1px;
}
.head.cut {
    height: 16px;
}
.head.cut .head-box {
    padding: 0 6px;
}
.head-box {
    border-bottom: 1px solid #414b51;
    background: linear-gradient(#4d575d, #474f56);
    border-top-right-radius: 6px;
    border-bottom-right-radius: 4px;
    padding: 1px 6px 4px 3px;
    font: 12px/15px "Roboto", sans-serif;
    color: #d3dade;
    display: flex;
    flex-wrap: wrap;
    align-content: space-between;
}
.head-name {
    width: 100%;
    white-space: nowrap;
}
.head-box .led {
    margin-left: auto;
}
.more {
    color: #343e44;
    font-weight: bold;
    line-height: 8px;
    padding-left: 12px;
}
.head-box svg {
    width: 16px;
    height: 12px;
    margin-left: auto;
}
.head-box svg + .led {
    margin-left: 7px;
}
.head .fold {
    margin-left: auto;
    border: 4px solid transparent;
    border-bottom: 5px solid #d3dade;
    border-top: none;
}
.head .fold + .led {
    margin-left: 8px;
}
.muted .head-name {
    color: #7b878d;
}
.child .head-box {
    margin-left: 6px;
    border-radius: 0;
    border-bottom-color: #474f56;
    padding-left: 2px;
}
.child .more {
    padding-left: 7px;
}
.pink .head-box {
    background: #6d566b;
}
.meter {
    background: #2f3e48;
    border-top: 1px solid #1f2c34;
}
.meter.lit {
    background: #9db0bc;
}
.meter.sel {
    border: 1px solid #a6e64a;
}
.lanes-wrap {
    position: relative;
}
.lanes {
    height: 100%;
    position: relative;
    background:
        linear-gradient(to right, #15242d 1px, transparent 1px) 0 0 / calc(100% / 109) 100%,
        linear-gradient(to right, #34444e 50%, #2e3d47 50%) 0 0 / calc(800% / 109) 100%;
}
.lane {
    height: 56px;
    position: relative;
    border-bottom: 1px solid #182730;
}
.lane.cut {
    height: 16px;
    overflow: hidden;
}
.clip {
    position: absolute;
    top: 1px;
    bottom: 0;
    overflow: hidden;
    background: linear-gradient(to bottom, transparent 14px, rgba(33, 44, 50, .75) 14px);
}
.clip-title {
    height: 14px;
    display: flex;
    align-items: center;
    gap: 2px;
    padding-left: 1px;
    white-space: nowrap;
    border-radius: 2px;
    font: 10px/14px "Roboto", "Noto Sans CJK SC", sans-serif;
    color: #dde2e4;
    background: var(--title);
}
.clip-title svg {
    width: 8px;
    height: 8px;
    flex: none;
}
.c-pat .clip-title, .c-wine .clip-title {
    font-size: 12px;
    gap: 3px;
}
.han {
    font-size: 12px;
}
.clip-body {
    display: block;
    width: 100%;
    height: 40px;
    color: var(--ink);
}
.kick .clip-title {
    gap: 0;
    padding: 0;
    background: repeating-linear-gradient(to right, #482f42 0 1px, transparent 1px calc(100% / var(--cells))), var(--title);
}
.kick .clip-title svg {
    width: calc(100% / var(--cells));
    color: #b798b0;
}
.faint .clip-title {
    color: #7d888e;
}
.c-pink { --title: #6a4a62; --ink: #cab2c9; }
.c-lilac { --title: #50495f; --ink: #b8b1cb; }
.c-green { --title: #4b645c; --ink: #b2ccc4; }
.c-leaf { --title: #52674f; --ink: #b7ccb7; }
.c-olive { --title: #656a52; --ink: #c3ccb1; }
.c-sand { --title: #6a6955; --ink: #c9c9b2; }
.c-red { --title: #7d4448; --ink: #cfa9ae; }
.c-pat { --title: linear-gradient(#434c51, #535b5e); --ink: #a5b0b6; }
.c-blue { --title: #4a4f7c; --ink: #a9b1cc; }
.c-plum { --title: #7b4578; --ink: #c2aac6; }
.c-wine { --title: linear-gradient(#434c51, #535b5e); --ink: #a8acb6; background: linear-gradient(to bottom, transparent 14px, #3a3344 14px); }
.playhead {
    position: absolute;
    top: 0;
    bottom: 0;
    width: 16px;
    margin-left: -16px;
    background: linear-gradient(to right, rgba(62, 120, 20, 0), rgba(78, 150, 30, .8));
    border-right: 2px solid #a6e64a;
}
.watermark {
    position: absolute;
    right: 0;
    bottom: 18px;
    font: bold 22px/26px "Noto Sans", sans-serif;
    color: #fff;
}
.scroll-side {
    display: flex;
    flex-direction: column;
    justify-content: space-between;
    align-items: flex-end;
    background: #363f46;
}
.scroll-side i {
    width: 19px;
    height: 33px;
    margin-top: 2px;
    background: #4f595f;
    border: 1px solid #5b656b;
}
```
FILE: script.js
```js
const BARS = 109;

const channels = [
    ['1', '808 Kick'], ['2', '808 Clap'], ['3', '808 HiHat'], ['4', '808 Snare'],
    ['5', 'KSHM..08_F#', 'notes'], ['6', 'VEDM2..8 (F)', 'notes'],
    ['8', 'Nexus'], ['11', 'Nexus #2'], ['12', 'Serum'], ['13', 'Nexus #3'], ['14', 'Nexus #4'],
    ['15', 'Nexus #5'], ['16', 'Nexus #6'], ['---', 'KSHMR..9 (G)'], ['---', 'Nexus #7'], ['23', 'Old vox'],
    ['27', 'VEDM2..5 (F)', 'notes'], ['28', 'VEDM2..5 (F)', 'notes'],
    ['30', 'Nexus #8'], ['31', 'Serum #2'], ['33', 'Serum #3'], ['34', 'Nexus #9'],
    ['41', 'VEDM2..E) #2'], ['42', 'VEDM2..5 (F)'], ['47', 'VEDM2..3 (E)'], ['---', 'VEDM2..0 (F)'],
    ['55', 'VND B..020 F'], ['56', 'FL Keys']
];

// small repeatable random so every load draws the same shapes
function rng(seed) {
    let s = seed * 7919 + 17;
    return () => {
        s = (s * 16807) % 2147483647;
        return s / 2147483647;
    };
}

function use(id) {
    return `<svg><use href="#i-${id}"/></svg>`;
}

// ---- channel rack ----
document.getElementById('channels').innerHTML = channels.map(([num, name, kind], i) => {
    const look = /Nexus|Serum|Old/.test(name) ? 'synth' : name === 'FL Keys' ? 'blue' : '';
    const long = name.length > 10 ? 'long' : '';
    const pick = i === 0 ? 'sel' : num === '8' ? 'on' : '';
    let steps = '';
    for (let n = 0; n < 16; n++) {
        steps += `<button class="step ${n % 8 > 3 ? 'red' : ''}" aria-label="Step ${n + 1}"></button>`;
    }
    return `<div class="channel">
        <button class="led" aria-label="Mute"></button><span class="pot"></span><span class="pot vol"></span>
        <span class="route">${num}</span><button class="name ${look} ${long}">${name}</button>
        <button class="pick ${pick}" aria-label="Select"></button>
        ${kind ? '<div class="mini"></div>' : `<div class="steps">${steps}</div>`}</div>`;
}).join('');

// ---- note drawings, 100 x 40 box ----
function rects(list) {
    return list.map(([x, y, w, h]) => `<rect x="${x}" y="${y}" width="${w}" height="${h || 3}"/>`).join('');
}

function svg(inner) {
    return `<svg class="clip-body" viewBox="0 0 100 40" preserveAspectRatio="none" fill="currentColor">${inner}</svg>`;
}

function row(y, n, w, h, from = 0, to = 100) {
    const out = [];
    for (let i = 0; i < n; i++) out.push([from + i * (to - from) / n, y, w, h]);
    return out;
}

function chords(len, w) {
    const out = [];
    const shift = [2, 0, 4, 7, 4, 0, 4, 2];
    for (let i = 0; i < len; i++) {
        [2, 11, 18, 28].forEach(y => out.push([i * w, y + shift[i % 8] / 1.4, w - .5, 1]));
    }
    return out;
}

function melody(len) {
    const out = [];
    const y = [25, 20, 15, 15, 25, 20, 15, 20];
    for (let i = 0; i < len; i++) {
        const x = i * 100 / len;
        out.push([x, y[i % 8], .8, 3], [x + 1.2, y[i % 8], .8, 3]);
        if (i % 4 < 2) out.push([x + 2.2, y[i % 8], .4, 3]);
        if (i % 8 === 3 && i > 15) out.push([x, 38, .8, 3], [x + 1.2, 38, .8, 3]);
    }
    return out;
}

function bass(len) {
    const y = [34, 32, 31, 34, 32, 34, 31, 32];
    const out = [];
    for (let i = 0; i < len; i++) out.push([i * 100 / len, y[i % 8], 100 / len, 1]);
    return out;
}

function scatter(count, seed, y0, y1, w, h) {
    const r = rng(seed);
    const out = [];
    for (let i = 0; i < count; i++) out.push([r() * 98, y0 + r() * (y1 - y0), w, h]);
    return out;
}

const notes = {
    p2: () => rects([[88, 1, 7, 4], [45, 9, 3, 4], [42, 16, 3, 4], [86, 20, 2, 4], [22, 37, 2, 3], [72, 37, 2, 3]].concat(row(28, 12, 5, 4))),
    dots: () => rects(row(26, 7, 3, 4, 0, 55).concat(row(26, 9, 4, 4, 57, 100))),
    p11: () => rects([[0, 17, 6], [6, 10, 7], [13, 2, 12], [25, 17, 6], [31, 10, 6], [37, 36, 13], [50, 17, 6], [56, 10, 6], [63, 2, 12], [75, 17, 12], [87, 10, 13]]),
    p5: () => rects(row(33, 10, 4, 3).concat(scatter(14, 5, 1, 24, 2, 3), [[42, 38, 3, 2]])),
    p9: () => rects([[12, 21, 11, 6], [62, 21, 11, 6], [40, 1, 8, 6], [92, 1, 7, 6]].concat(row(12, 9, 2, 5), row(36, 6, 2, 4, 8, 98), scatter(5, 2, 1, 4, 2, 5))),
    p3: () => rects(melody(31)),
    p4: () => `<g opacity=".45">${rects(scatter(70, 12, 2, 28, .5, 2))}</g>` + rects(bass(23)),
    p4b: () => `<g opacity=".45">${rects(scatter(40, 22, 2, 24, 1, 2))}</g>` + rects(bass(9)),
    p7: () => rects(chords(8, 12.5)),
    p22: () => `<g opacity=".7">${rects(scatter(24, 7, 2, 36, 2, 2).concat(row(20, 6, 4, 2)))}</g>`,
    p6: () => rects([[0, 34, 7, 1], [7, 31, 7, 1], [14, 29, 14, 1], [28, 34, 8, 1], [36, 31, 7, 1], [43, 39, 14, 1], [57, 34, 14, 1], [71, 29, 15, 1], [86, 34, 14, 1]]) + `<g opacity=".5">${rects(scatter(10, 31, 1, 6, 2, 2))}</g>`,
    p10: () => `<g opacity=".4">${rects(scatter(34, 15, 2, 36, 1, 2))}</g>`,
    p14: () => rects([[0, 35, 7, 5], [7, 25, 7, 5], [14, 15, 14, 5], [29, 35, 7, 5], [36, 25, 7, 5], [43, 1, 13, 5], [57, 35, 7, 5], [64, 25, 7, 5], [72, 15, 14, 5], [86, 35, 14, 5]]),
    p21: () => {
        const out = [[12, 1, 12, 4], [37, 1, 6, 4], [62, 1, 6, 4], [88, 1, 12, 4], [0, 37, 6, 3], [25, 37, 6, 3], [50, 37, 6, 3], [75, 37, 6, 3]];
        for (let i = 0; i < 16; i++) {
            if (i === 3 || i === 15 || i % 2 === 0) out.push([i * 6.25, 14, 6.25, 3], [i * 6.25, 24, 6.25, 3]);
            else out.push([i * 6.25, 8, 6, 3], [i * 6.25, 31, 6, 3]);
        }
        return rects(out);
    }
};

// ---- audio drawings ----
function envelope(n, fn) {
    let up = '';
    let down = '';
    for (let i = 0; i <= n; i++) {
        const x = (i / n * 100).toFixed(2);
        const a = Math.min(1, fn(i / n, i));
        up += `${i ? 'L' : 'M'}${x} ${(20 - a * 19).toFixed(1)}`;
        down = `L${x} ${(20 + a * 19).toFixed(1)}` + down;
    }
    return `<path d="${up}${down}z"/>`;
}

const waves = {
    kick: len => {
        const n = Math.max(1, Math.round(len * 4));
        const w = 100 / n;
        let d = '';
        for (let i = 0; i < n; i++) {
            const x = i * w;
            d += `M${x} 12L${x + w * .25} 0H${x + w * .6}L${x + w} 12V28L${x + w * .6} 40H${x + w * .25}L${x} 28z`;
        }
        return `<path d="${d}"/>`;
    },
    loop: (len, r) => envelope(Math.round(len * 8), (t, i) => .42 + r() * .2 + (i % 8 === 0 ? r() * .35 : 0)),
    roll: (len, r) => envelope(112, (t, i) => {
        if (t > .88) return .2 + (1 - t) * 5;
        if (t < .5 && i % 4 === 0) return .2 + t * .6;
        return .68 + (t > .45 ? .1 : 0) + r() * .14;
    }),
    rise: (len, r) => envelope(90, t => Math.min(.25, .03 + t * .32) + r() * .05 * t),
    swell: len => envelope(24, t => .05 + Math.pow(t, 2.2) * .9),
    hit: len => envelope(12, t => t < .45 ? .15 + t * 1.2 : .9 - (t - .45) * .3),
    thin: len => envelope(10, t => Math.sin(Math.PI * (.15 + t * .8)) * .85),
    full: len => envelope(4, () => .98),
    pluck: len => envelope(20, t => t < .4 ? 1 : .3 * (1 - t)),
    pluckfull: len => envelope(20, t => t < .15 ? .95 : .55),
    swellback: len => envelope(16, t => t < .2 ? .8 : .5 * Math.pow(1 - t, 3) + .03),
    strike: len => envelope(20, t => t < .2 ? .06 : t < .65 ? .95 : .02),
    tick: len => envelope(6, t => Math.sin(Math.PI * t) * .35),
    fade: (len, r) => envelope(24, t => Math.sqrt(1 - t * t * .95) * .95 - r() * .04),
    arc: () => '<path d="M0 14Q80 14 98 40" fill="none" stroke="currentColor" vector-effect="non-scaling-stroke"/>',
    vocal: (len, r) => envelope(Math.round(len * 8), t => {
        const b = t * len;
        return (.2 + .4 * Math.abs(Math.sin(b * 1.25 + .2))) * (.65 + r() * .6) * Math.min(1, .15 + b) + .03;
    }),
    loud: (len, r) => envelope(Math.round(len * 8), t => {
        const b = t * len;
        return (.45 + .3 * Math.sqrt(Math.abs(Math.sin(b * .72 + .6)))) * (.75 + r() * .45) * (t > .93 ? (1 - t) * 12 : 1) + .03;
    })
};

const curves = {
    fab: '<path d="M0 39H75Q92 38 99 1V39" fill="none" stroke="currentColor" stroke-width="1.5" vector-effect="non-scaling-stroke"/><path d="M75 39Q92 38 99 1V39z" opacity=".15"/>',
    pitch: '<path d="M0 21H45C60 21 57 2 64 2H90C97 2 98 18 99 40" fill="none" stroke="currentColor" stroke-width="1.5" vector-effect="non-scaling-stroke"/><path d="M0 21H45C60 21 57 2 64 2H90C97 2 98 18 99 40H0z" opacity=".2"/>'
};

// [start bar, end bar, colour, drawing, title]
const K = (a, b) => [a, b, 'pink', 'kick'];
const P2 = a => [a, a + 4, 'pat', 'p2', '样..2'];
const SW = a => [a, a + 8, 'sand', 'rise', 'KSHMR..eep 01'];
const list = (pairs, colour, shape) => pairs.map(([a, b]) => [a, b, colour, shape]);

function stripes(from, to, seed) {
    const r = rng(seed);
    const out = [];
    for (let b = from; b < to - .1; b += .25) {
        if (r() > .2) out.push([b, b + (r() > .75 ? .2 : .12), 'pink', 'full']);
    }
    return out;
}

const tracks = [
    { cut: true, name: '', clips: [] },
    { name: 'Track 3', muted: true, clips: [] },
    { name: 'Track 4', clips: [[72, 79, 'plum', 'pitch', 'KSHM..音高']] },
    { name: 'Track 5', meter: 'sel', fold: true, clips: [
        K(0, 7), [8, 16, 'lilac', 'roll', 'KSHMR 1..ill 03'], K(16, 19.5), K(20, 23.5), K(24, 27.4), K(28, 31),
        K(32, 39), K(40, 47), K(48, 49.7), K(50, 51.4), K(52, 55), K(56, 60), K(64, 64.2), K(65, 71), K(72, 79),
        K(81, 84.4), K(85, 85.6), K(86, 86.7), K(87, 88), K(89, 92.5), K(93, 96)] },
    { name: 'Track 6', child: true, clips: [
        [8, 15, 'pat', 'dots', 'ICONS'], P2(16), P2(20), P2(24), P2(28), [32, 40, 'pat', 'p11', '样式 11'],
        [40, 44, 'pat', 'p5', '样..5'], [44, 48, 'pat', 'p5', '样..5'], [48, 79, 'pat', 'p3', '样式 3'],
        P2(81), P2(85), P2(89), P2(93)] },
    { name: 'Track 7', child: true, meter: 'lit', clips: [
        [32, 40, 'pat', 'p7', '样式 7'], [40, 44, 'pat', 'p9', '样..9'], [44, 48, 'pat', 'p9', '样..9'],
        [48, 71, 'pat', 'p4', '样式 4'], [72, 81, 'pat', 'p4b', '样式 4'],
        [89, 93, 'pat', 'p22', '样..2'], [93, 97, 'pat', 'p22', '样..2']] },
    { name: 'Track 8', child: true, meter: 'lit', clips: [
        [0, 4, 'green', 'loop', 'gu..r'], [4, 8, 'green', 'loop', 'gu..r'],
        ...list([[8.4, 9], [10.35, 11], [12.4, 13], [14.4, 15]], 'green', 'hit'),
        [24, 28, 'green', 'loop', 'gu..r'], [28, 32, 'green', 'loop', 'gu..r'],
        [48, 50.4, 'olive', 'vocal', ' '], [50.4, 58.2, 'olive', 'vocal', '1_吉..duction'],
        [58.2, 64, 'olive', 'vocal', '1..uction'], [64, 65.3, 'olive', 'loud', ' '],
        [65.3, 81, 'olive', 'loud', '1_吉克隽逸,汪.._No_Reduction'],
        ...list([[81.4, 81.5], [82.3, 82.6], [82.8, 82.9], [83.3, 83.4], [83.6, 83.7], [84.4, 84.65], [85.1, 85.2], [85.7, 85.8], [86.2, 86.3], [86.6, 86.7], [86.9, 87], [87.1, 87.2], [87.6, 87.7], [88.1, 88.2]], 'olive', 'full'),
        [92.5, 93, 'olive', 'hit']] },
    { name: 'Track 9', child: true, clips: [
        [0, 15.1, 'blue', 'fab', 'FabFilter Pro-Q 3 - 混音电平'], [64, 71, 'pat', 'p6', '样式 6'], [72, 79, 'pat', 'p6', '样式 6'],
        [80, 81, 'olive', 'swell', ' '],
        ...list([[84.5, 85.1], [86.5, 86.8], [88.5, 89], [89.5, 90], [91.5, 92], [93.5, 94], [95.5, 96]], 'olive', 'hit')] },
    { name: 'Track 10', child: true, clips: [
        [7, 8, 'leaf', 'pluckfull', ' '], [31, 31.2, 'green', 'full'], [31.25, 31.6, 'green', 'full'],
        [64, 71, 'pat', 'p10', '样式 10'], [72, 79, 'pat', 'p10', '样式 10']] },
    { name: 'VEDM2 Closed<br>Hihat 011', pink: true, clips: [
        ...stripes(8, 15, 3), ...stripes(24.2, 31, 8), [48, 55, 'wine', 'p14', '样式 14'],
        ...stripes(65.3, 71, 4), [71.5, 78.4, 'wine', 'p14', '样式 14'],
        ...stripes(89, 92, 5), ...stripes(93, 96, 6)] },
    { name: 'Track 12', clips: [
        ...list([[16, 16.3], [17, 17.3], [18, 18.3], [19, 19.3], [20, 20.3], [21, 21.4], [22, 22.3], [23, 23.3], [24, 24.3], [25, 25.3], [26, 26.3], [27, 27.35], [28, 28.3], [29, 29.3], [30, 30.35], [31, 31.3]], 'lilac', 'thin'),
        ...list([[16.5, 16.7], [18.5, 18.7], [19.6, 19.8], [20.6, 20.8], [22.5, 22.7], [23.6, 23.8]], 'red', 'thin'),
        [49.7, 50.2, 'green', 'swellback'], [51.6, 52.4, 'green', 'swellback'], [55, 55.6, 'green', 'full'], [55.8, 56.4, 'red', 'arc'],
        [64, 80, 'pat', 'p21', '样式 21'], [80, 80.3, 'sand', 'full'], [80.4, 80.6, 'sand', 'full'], [80.7, 81.1, 'sand', 'thin'],
        ...list([[83, 83.3], [85, 85.3], [86.7, 87.1]], 'green', 'thin'),
        ...list([[81.4, 81.6], [81.7, 82], [83.5, 83.7], [83.8, 84], [85.5, 85.7], [85.8, 86], [87.5, 87.7], [87.8, 88]], 'red', 'thin')] },
    { name: 'Track 13', clips: [
        ...list([[16.6, 16.8], [18.6, 18.9], [20.6, 20.9], [22.6, 22.8], [24.6, 24.9], [26.6, 26.9], [28.6, 28.8], [30.6, 30.8]], 'olive', 'thin'),
        ...list([[17.6, 18.1], [19.7, 20.3], [21.7, 22.2], [23.8, 24.3], [25.6, 26.2], [27.7, 28.3], [29.6, 30.2]], 'green', 'pluck'),
        [30.9, 32, 'red', 'swell', ' '], [55.8, 56.6, 'green', 'fade'], [64, 64.5, 'lilac', 'swellback'], [64.5, 65.2, 'lilac', 'swellback'],
        [82.8, 82.95, 'green', 'full'],
        ...[71.5, 84.5, 88, 96].map(a => [a, a + .95, 'olive', 'strike', ' '])] },
    { name: 'Track 14', clips: [
        ...[15, 23, 31, 71, 80, 88].map(a => [a, a + 1, 'leaf', 'swell', ' ']),
        ...[81.05, 83.2, 85.1, 87.1, 89.05, 91.2, 93.1, 95.1].map(a => [a, a + .12, 'lilac', 'tick'])] },
    { name: 'Track 15', meter: 'lit', clips: [SW(0), SW(8), SW(24), SW(48), SW(56), SW(64), SW(72), [83, 85, 'green', 'fade', ' '], SW(85)] },
    { name: 'Track 16', muted: true, clips: [] },
    { name: 'Track 17', muted: true, clips: [] },
    { name: 'Track 18', muted: true, clips: [] }
];

function drawing(kind, len, seed) {
    if (notes[kind]) return svg(notes[kind]());
    if (curves[kind]) return svg(curves[kind]);
    return svg(waves[kind](len, rng(seed)));
}

function clipHtml([a, b, colour, kind, title], i) {
    const len = b - a;
    const icon = colour === 'pat' || colour === 'wine' ? 'pat' : colour === 'blue' || colour === 'plum' ? 'auto' : 'clip';
    let head = '';
    let extra = '';
    if (kind === 'kick') {
        head = use('clip').repeat(Math.floor(len));
        extra = 'kick';
    } else if (title === 'ICONS') {
        head = use('pat').repeat(4);
        extra = 'faint';
    } else if (title === ' ') {
        head = use(icon);
    } else if (title) {
        head = `${use(icon)}<span>${title.replace(/[\u4e00-\u9fff]+/g, '<span class="han">$&</span>')}</span>`;
    }
    return `<div class="clip c-${colour} ${extra}" style="left:${a / BARS * 100}%;width:${len / BARS * 100}%;--cells:${len}">
        <div class="clip-title">${head}</div>${drawing(kind, len, i + Math.round(a) + 1)}</div>`;
}

document.getElementById('lanes').innerHTML = tracks.map(t =>
    `<div class="lane ${t.cut ? 'cut' : ''}">${t.cut
        ? `<div class="clip c-blue" style="left:${89 / BARS * 100}%;width:${10 / BARS * 100}%"><svg class="clip-body" viewBox="0 0 100 40" preserveAspectRatio="none" fill="none"><path d="M0 13H68Q79 13 84 -2" stroke="currentColor" stroke-width="2" vector-effect="non-scaling-stroke"/></svg></div>`
        : t.clips.map(clipHtml).join('')}</div>`
).join('') + `<div class="playhead" style="left:${63.7 / BARS * 100}%"></div>`;

document.getElementById('heads').innerHTML = tracks.map(t =>
    `<div class="head ${t.cut ? 'cut' : ''} ${t.muted ? 'muted' : ''} ${t.child ? 'child' : ''} ${t.pink ? 'pink' : ''}">
        <div class="head-box">${t.cut ? '' : `<span class="head-name">${t.name}</span>`}<span class="more">...</span>
        ${t.pink ? use('wave') : ''}${t.fold ? '<i class="fold"></i>' : ''}<button class="led" aria-label="Mute track"></button></div>
        <div class="meter ${t.meter || ''}"></div></div>`
).join('');

// ---- ruler and overview ----
let ruler = '';
for (let b = 0; b < BARS; b += 4) {
    ruler += `<span style="left:${b / BARS * 100}%">${b + 1}</span>`;
}
document.getElementById('ruler').innerHTML = ruler + `<i style="left:${63.7 / BARS * 100}%"></i>`;

const vr = rng(42);
let mini = '';
for (let i = 0; i < 180; i++) {
    const tint = ['#7f7387', '#7c8f93', '#8a9179'][i % 3];
    mini += `<rect x="${vr() * 500}" y="${3 + Math.floor(vr() * 6) * 2}" width="${2 + vr() * 14}" height="1" fill="${tint}" opacity=".6"/>`;
}
document.getElementById('view').innerHTML = `<svg viewBox="0 0 578 19" preserveAspectRatio="none">${mini}
    <path d="M0 5H140M190 5H330M345 5H450" stroke="#7f7387" stroke-width="2" stroke-dasharray="22 4"/>
    <path d="M0 9H60l20 2h90M220 17h180" stroke="#8296a5" fill="none"/>
    <rect x="332" y="0" width="5" height="19" fill="#4f8f25"/><rect x="336" y="0" width="2" height="19" fill="#d0f07a"/></svg>`;

// ---- pattern picker ----
let patterns = '';
for (let n = 1; n <= 22; n++) {
    const r = rng(n * 13);
    const count = [13, 19].includes(n) ? 1 : 12;
    let dots = '';
    if (n === 7 || n === 21) {
        for (let i = 0; i < 8; i++) {
            [4, 9, 14, 19, 23].forEach(y => { dots += `<rect x="${i * 12}" y="${y + (i % 2) * 2}" width="11" height="1"/>`; });
        }
    } else {
        for (let i = 0; i < count; i++) {
            dots += `<rect x="${8 + r() * 80}" y="${3 + Math.floor(r() * 5) * 5}" width="${2 + r() * 8}" height="1"/>`;
        }
    }
    patterns += `<li class="${n === 4 ? 'marked' : ''} ${n === 22 ? 'current' : ''}">${use('pat')}<span>样式 ${n}</span>
        <svg class="notes" viewBox="0 0 93 26" fill="currentColor">${dots}</svg></li>`;
}
document.getElementById('patterns').innerHTML = patterns;
```
